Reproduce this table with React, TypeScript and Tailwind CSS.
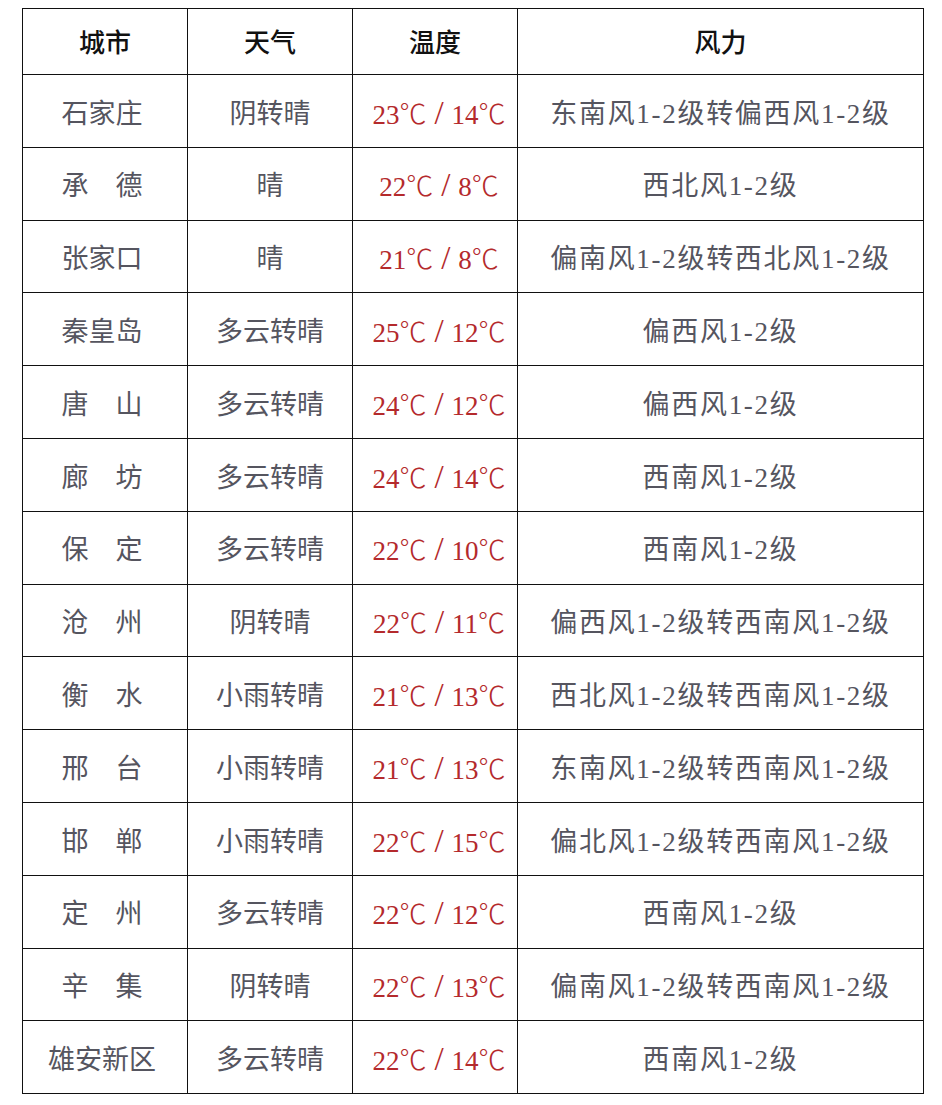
import React from "react";

const rows: [string, string, string, string][] = [
  ["石家庄", "阴转晴", "23℃/14℃", "东南风1-2级转偏西风1-2级"],
  ["承　德", "晴", "22℃/8℃", "西北风1-2级"],
  ["张家口", "晴", "21℃/8℃", "偏南风1-2级转西北风1-2级"],
  ["秦皇岛", "多云转晴", "25℃/12℃", "偏西风1-2级"],
  ["唐　山", "多云转晴", "24℃/12℃", "偏西风1-2级"],
  ["廊　坊", "多云转晴", "24℃/14℃", "西南风1-2级"],
  ["保　定", "多云转晴", "22℃/10℃", "西南风1-2级"],
  ["沧　州", "阴转晴", "22℃/11℃", "偏西风1-2级转西南风1-2级"],
  ["衡　水", "小雨转晴", "21℃/13℃", "西北风1-2级转西南风1-2级"],
  ["邢　台", "小雨转晴", "21℃/13℃", "东南风1-2级转西南风1-2级"],
  ["邯　郸", "小雨转晴", "22℃/15℃", "偏北风1-2级转西南风1-2级"],
  ["定　州", "多云转晴", "22℃/12℃", "西南风1-2级"],
  ["辛　集", "阴转晴", "22℃/13℃", "偏南风1-2级转西南风1-2级"],
  ["雄安新区", "多云转晴", "22℃/14℃", "西南风1-2级"],
];

const font = {
  fontFamily: '"Liberation Serif", "Noto Sans CJK SC", serif',
};

function Temp({ t }: { t: string }) {
  const [a, b] = t.split("/");
  const part = (s: string) => {
    const n = s.replace("℃", "");
    return (
      <>
        {n}
        <span className="font-['Noto_Sans_CJK_SC',sans-serif] font-light">℃</span>
      </>
    );
  };
  return (
    <span className="whitespace-nowrap">
      {part(a)}
      <span className="mx-[8px] text-[33px] leading-none">/</span>
      {part(b)}
    </span>
  );
}

export default function App() {
  return (
    <div className="w-[942px] h-[1105px] bg-white pt-[8px] pl-[22px]" style={font}>
      <table className="border-collapse table-fixed w-[901px] text-[27px]">
        <colgroup>
          <col className="w-[165px]" />
          <col className="w-[165px]" />
          <col className="w-[165px]" />
          <col className="w-[406px]" />
        </colgroup>
        <thead>
          <tr className="h-[66px]">
            {["城市", "天气", "温度", "风力"].map((h) => (
              <th
                key={h}
                className="border-[1.5px] border-[#111] text-center align-middle font-medium text-[#111] text-[26px] p-0 pt-[4px]"
              >
                {h}
              </th>
            ))}
          </tr>
        </thead>
        <tbody>
          {rows.map((r, i) => (
            <tr key={i} className="h-[72.8px]">
              <td className="border-[1.5px] border-[#111] text-center align-middle text-[#55555f] p-0 pt-[6px] pr-[6px]">
                {r[0]}
              </td>
              <td className="border-[1.5px] border-[#111] text-center align-middle text-[#55555f] p-0 pt-[6px]">
                {r[1]}
              </td>
              <td className="border-[1.5px] border-[#111] text-center align-middle text-[#b42a2c] p-0 pt-[6px] pl-[8px]">
                <Temp t={r[2]} />
              </td>
              <td className="border-[1.5px] border-[#111] text-center align-middle text-[#55555f] p-0 pt-[6px] tracking-[1.7px]">
                {r[3]}
              </td>
            </tr>
          ))}
        </tbody>
      </table>
    </div>
  );
}
